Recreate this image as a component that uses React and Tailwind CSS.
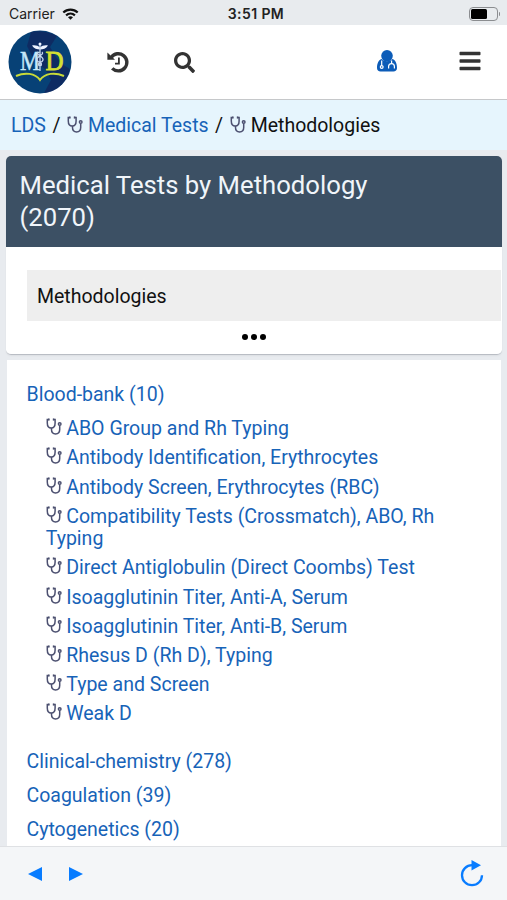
import React from "react";
import { FaBars, FaSearch } from "react-icons/fa";

const tests = [
  "ABO Group and Rh Typing",
  "Antibody Identification, Erythrocytes",
  "Antibody Screen, Erythrocytes (RBC)",
  "Compatibility Tests (Crossmatch), ABO, Rh Typing",
  "Direct Antiglobulin (Direct Coombs) Test",
  "Isoagglutinin Titer, Anti-A, Serum",
  "Isoagglutinin Titer, Anti-B, Serum",
  "Rhesus D (Rh D), Typing",
  "Type and Screen",
  "Weak D",
];

const categories = [
  "Clinical-chemistry (278)",
  "Coagulation (39)",
  "Cytogenetics (20)",
];

function Stethoscope({ className }) {
  return (
    <svg
      viewBox="0 0 16 17"
      fill="none"
      stroke="#4c5070"
      strokeWidth="1.5"
      className={`inline-block w-4 h-[17px] ${className}`}
    >
      <path d="M3.2 1.5H1.3V5C1.3 8.2 2.8 10 5.2 10S9.1 8.2 9.1 5V1.5H7.2" />
      <path d="M5.5 10V11.6C5.5 14.6 7 16 9.6 16S13.7 14.6 13.7 11.6V7.4" />
      <path d="M2.1 1.5H3.6M6.8 1.5H8.3" strokeWidth="2" />
      <circle cx="13.7" cy="6" r="1.3" />
    </svg>
  );
}

function HistoryIcon({ className }) {
  return (
    <svg viewBox="0 0 22 22" fill="none" stroke="#333" className={className}>
      <path d="M4.2 6.4A8.6 8.6 0 1 1 5.2 17.4" strokeWidth="3.4" />
      <path d="M.4 1.6L8 8.8H.4Z" fill="#333" stroke="none" />
      <path d="M11.9 6.6V12.6H8" strokeWidth="1.8" />
    </svg>
  );
}

function DoctorIcon({ className }) {
  return (
    <svg viewBox="0 0 20 22" className={className}>
      <path d="M4.6 9C7.6 12 12.4 12 15.4 9C18.8 10 20 14 20 18C20 20.2 18.6 21.6 16.4 21.6H3.6C1.4 21.6 0 20.2 0 18C0 14 1.2 10 4.6 9Z" fill="#0c5cb8" />
      <circle cx="10" cy="5.8" r="5.8" fill="#0c5cb8" />
      <g fill="none" stroke="#fff" strokeWidth="1.2">
        <path d="M4.7 10.4V15.6M14.6 10.4V13.6" />
        <circle cx="4.7" cy="17" r="1.4" />
        <path d="M11.6 18.6V16.6C11.6 14.6 12.8 13.6 14.6 13.6S17.4 14.6 17.4 16.6V18.6" />
      </g>
    </svg>
  );
}

function Logo() {
  return (
    <svg viewBox="0 0 64 64" className="w-16 h-16">
      <circle cx="32" cy="32" r="31.5" fill="#074176" />
      <path d="M23 2C30 0 42 2 49 6L42 17 48 27 57 36 62 39C59 52 49 62 36 63L43 50 37 39 27 32 19 16Z" fill="#12245c" opacity=".75" />
      <g fontFamily="Liberation Serif, serif" fontSize="27">
        <text x="12" y="39.5" fill="#c5e8fa" stroke="#c5e8fa" strokeWidth=".5" textLength="20" lengthAdjust="spacingAndGlyphs">M</text>
        <text x="37.5" y="39.5" fill="#d3df32" stroke="#d3df32" strokeWidth=".9" textLength="18" lengthAdjust="spacingAndGlyphs">D</text>
      </g>
      <path d="M24 15.5C28 15 30 16 32 17.5 34 16 36 15 40 15.5 38 18.5 35 19.5 32 19.5S26 18.5 24 15.5Z" fill="#eef3ff" />
      <circle cx="32" cy="14" r="1.5" fill="#eef3ff" />
      <path d="M32 15V41M30 22C27 25 36 26 35 30S29 31 31 36M34 22C37 25 28 26 29 30S35 31 33 36" fill="none" stroke="#c5d8ef" strokeWidth="1.3" />
      <path d="M8 46C17 42 27 43 32 50 37 43 47 42 56 46" fill="none" stroke="#c8da38" strokeWidth="2" />
    </svg>
  );
}

function StatusBar() {
  return (
    <div className="h-[25px] shrink-0 bg-[#e8ebee] grid grid-cols-3 items-center pl-[9px] pr-[7px] pt-[2px] font-['Inter',sans-serif] text-[14px] leading-none text-[#222]">
      <div className="flex items-center gap-[7px]">
        <span>Carrier</span>
        <svg viewBox="0 0 18 13" className="w-[17px] h-[12px]" fill="none" stroke="#111" strokeWidth="2.4">
          <path d="M1.2 4.9C5.6.7 12.4.7 16.8 4.9" />
          <path d="M4.2 8C7 5.5 11 5.5 13.8 8" />
          <path d="M9 12.6L6.3 10C7.9 8.7 10.1 8.7 11.7 10Z" fill="#111" stroke="none" />
        </svg>
      </div>
      <span className="text-center font-semibold whitespace-nowrap pl-[3px] tracking-[0.4px]">3:51 PM</span>
      <div className="flex items-center justify-end gap-px">
        <div className="w-[29px] h-[14px] border border-[#8b8d90] rounded-[4px] p-px">
          <div className="w-4 h-full bg-black rounded-[1.5px]" />
        </div>
        <div className="w-[1.5px] h-1 bg-[#8b8d90] rounded-r" />
      </div>
    </div>
  );
}

function Header() {
  return (
    <header className="h-[75px] shrink-0 bg-white border-b border-[#c6c8ca] flex items-center pl-2 pr-[25px]">
      <Logo />
      <HistoryIcon className="ml-[35px] size-[22px]" />
      <FaSearch className="ml-[45px] size-[21px] text-[#333]" />
      <DoctorIcon className="ml-auto w-5 h-[22px] -mt-0.5" />
      <FaBars className="ml-[61px] size-6 text-[#333] -mt-0.5" />
    </header>
  );
}

function App() {
  return (
    <div className="w-full h-[900px] flex flex-col overflow-hidden bg-[#e8ebef] font-['Roboto',sans-serif] text-[19.5px] text-[#111]">
      <StatusBar />
      <Header />

      <nav className="h-[50px] shrink-0 bg-[#e6f5fd] flex items-center pl-[11px] pt-[2px] whitespace-nowrap">
        <a className="text-[#1763b8]">LDS</a>
        <span className="mx-[6.5px]">/</span>
        <Stethoscope className="mr-[5px] -mt-1" />
        <a className="text-[#1763b8]">Medical Tests</a>
        <span className="mx-[6.5px]">/</span>
        <Stethoscope className="mr-[5px] -mt-1" />
        <span>Methodologies</span>
      </nav>

      <main className="flex-1 min-h-0 overflow-hidden pt-[6px]">
        <section className="ml-[6px] mr-[5px] h-[199px] bg-white rounded-[5px] border-b border-[#b9bdc4] shadow-xs overflow-hidden">
          <h1 className="h-[91px] bg-[#3c5064] text-[#f0f5fa] text-[25.7px] leading-[31.5px] pl-[13.5px] pr-24 pt-[14px]">
            Medical Tests by Methodology (2070)
          </h1>
          <div className="mt-[23px] ml-[21px] mr-px h-[51px] bg-[#eee] flex items-center pl-[10px] pt-[3px]">
            Methodologies
          </div>
          <div className="flex justify-center gap-[3px] mt-[13px]">
            <span className="size-[6px] rounded-full bg-black" />
            <span className="size-[6px] rounded-full bg-black" />
            <span className="size-[6px] rounded-full bg-black" />
          </div>
        </section>

        <section className="mt-[5px] ml-[7px] mr-[6px] bg-white h-[600px] pl-[19.5px] pt-[23px] text-[#1763b8]">
          <h2 className="leading-[24px]">Blood-bank (10)</h2>
          <ul className="mt-[11.4px] pl-[19.2px] pr-12 text-[19.55px]">
            {tests.map((test) => (
              <li key={test} className="leading-[22.7px] mb-[6.4px]">
                <Stethoscope className="mr-[4.5px] align-[0px]" />
                {test}
              </li>
            ))}
          </ul>
          <div className="mt-[24.6px]">
            {categories.map((category) => (
              <h2 key={category} className="leading-[24px] mb-[10px]">
                {category}
              </h2>
            ))}
          </div>
        </section>
      </main>

      <footer className="h-[54px] shrink-0 bg-[#f4f6f8] border-t border-[#dfe1e4] flex items-center pl-[28px] pr-[23px]">
        <svg viewBox="0 0 14 14" className="size-[14px]" fill="#087cff">
          <path d="M14 0V14L0 7Z" />
        </svg>
        <svg viewBox="0 0 14 14" className="ml-[27px] size-[14px]" fill="#087cff">
          <path d="M0 0V14L14 7Z" />
        </svg>
        <svg viewBox="0 0 24 27" className="ml-auto w-6 h-[27px]" fill="none" stroke="#087cff" strokeWidth="2.3">
          <path d="M12 5.2A10 10 0 1 0 22 15.2" />
          <path d="M11.5 0V10.4L21 5.2Z" fill="#087cff" stroke="none" />
        </svg>
      </footer>
    </div>
  );
}

export default App;
